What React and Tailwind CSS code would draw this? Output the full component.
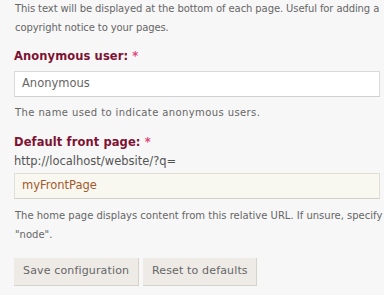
const font = { fontFamily: '"DejaVu Sans", Verdana, sans-serif' };

const Label = ({ children }) => (
  <div className="text-[11.5px] font-bold leading-[18px] tracking-[0.1px] text-[#7d1232]">
    {children} <span className="text-[#e0457b]">*</span>
  </div>
);

const Desc = ({ children, className = "" }) => (
  <p className={`mr-[-4px] pl-px text-[10px] leading-[19px] text-[#666] ${className}`}>{children}</p>
);

const Button = ({ children, className = "" }) => (
  <button className={`h-[28px] whitespace-nowrap border-b border-r border-[#d5d2cc] bg-[#eeebe6] pl-[9px] text-left text-[11px] tracking-[0.15px] text-[#666] ${className}`}>
    {children}
  </button>
);

export default function App() {
  return (
    <div className="min-h-[295px] w-[384px] overflow-hidden bg-[#f7f7f7] pl-[14px] pr-[4px]" style={font}>
      <Desc className="mt-[-1px] tracking-[-0.1px]">
        This text will be displayed at the bottom of each page. Useful for adding a copyright notice to your pages.
      </Desc>

      <div className="mt-[10px]">
        <Label>Anonymous user:</Label>
        <div className="mt-[6px] flex h-[26px] items-center border border-[#dadada] border-b-[#cfcfcf] bg-white px-[7px] text-[11.5px] text-[#666]">
          Anonymous
        </div>
        <Desc className="mt-[6px] tracking-[0.4px]">The name used to indicate anonymous users.</Desc>
      </div>

      <div className="mt-[11px]">
        <Label>Default front page:</Label>
        <div className="mt-[1px] text-[11.5px] leading-[18px] text-[#555]">http://localhost/website/?q=</div>
        <div className="mt-[3px] flex h-[26px] items-center border border-[#e0dfd6] border-b-[#d2d1c8] bg-[#f9f8f0] px-[7px] text-[11.5px] text-[#a4582c]">
          myFrontPage
        </div>
        <Desc className="mt-[7px]">
          The home page displays content from this relative URL. If unsure, specify "node".
        </Desc>
      </div>

      <div className="mt-[14px] flex gap-[4px]">
        <Button className="w-[125px]">Save configuration</Button>
        <Button className="w-[114px]">Reset to defaults</Button>
      </div>
    </div>
  );
}
